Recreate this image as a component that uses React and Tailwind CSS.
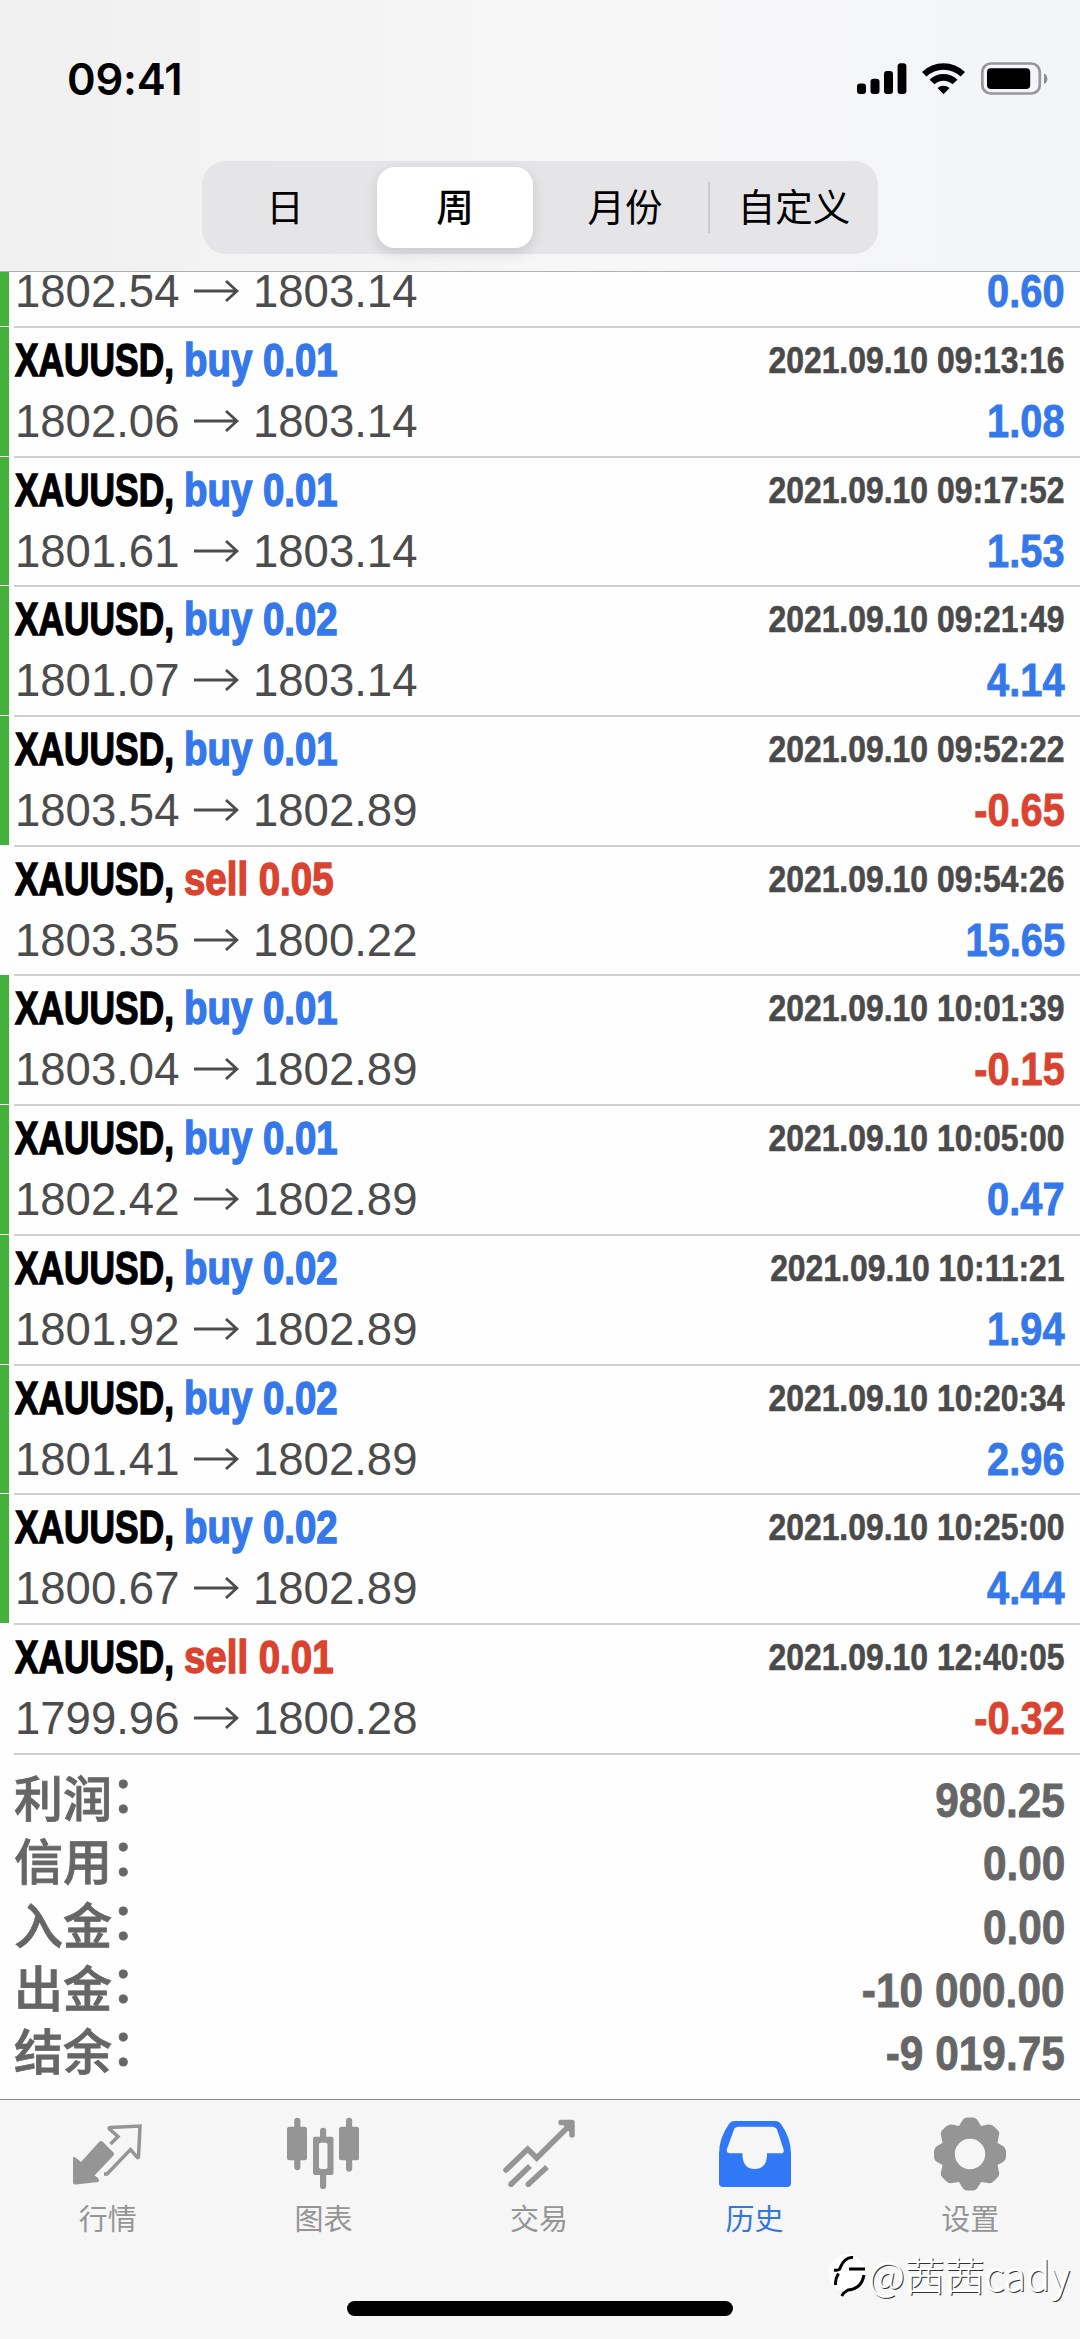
import React from "react";

const deals = [
  { type: "buy", volume: "0.01", open: "1802.06", close: "1803.14", time: "2021.09.10 09:13:16", profit: "1.08", marked: true },
  { type: "buy", volume: "0.01", open: "1801.61", close: "1803.14", time: "2021.09.10 09:17:52", profit: "1.53", marked: true },
  { type: "buy", volume: "0.02", open: "1801.07", close: "1803.14", time: "2021.09.10 09:21:49", profit: "4.14", marked: true },
  { type: "buy", volume: "0.01", open: "1803.54", close: "1802.89", time: "2021.09.10 09:52:22", profit: "-0.65", marked: true },
  { type: "sell", volume: "0.05", open: "1803.35", close: "1800.22", time: "2021.09.10 09:54:26", profit: "15.65", marked: false },
  { type: "buy", volume: "0.01", open: "1803.04", close: "1802.89", time: "2021.09.10 10:01:39", profit: "-0.15", marked: true },
  { type: "buy", volume: "0.01", open: "1802.42", close: "1802.89", time: "2021.09.10 10:05:00", profit: "0.47", marked: true },
  { type: "buy", volume: "0.02", open: "1801.92", close: "1802.89", time: "2021.09.10 10:11:21", profit: "1.94", marked: true },
  { type: "buy", volume: "0.02", open: "1801.41", close: "1802.89", time: "2021.09.10 10:20:34", profit: "2.96", marked: true },
  { type: "buy", volume: "0.02", open: "1800.67", close: "1802.89", time: "2021.09.10 10:25:00", profit: "4.44", marked: true },
  { type: "sell", volume: "0.01", open: "1799.96", close: "1800.28", time: "2021.09.10 12:40:05", profit: "-0.32", marked: false },
];

const totals = [
  { label: "利润", value: "980.25" },
  { label: "信用", value: "0.00" },
  { label: "入金", value: "0.00" },
  { label: "出金", value: "-10 000.00" },
  { label: "结余", value: "-9 019.75" },
];

const StatusBar = () => (
  <div className="flex h-[161px] items-start justify-between pl-[67px] pr-[31px] pt-[55px]">
    <span className="font-['Inter'] text-[43.500px] font-semibold leading-[48px] tracking-[-0.2px]">09:41</span>
    <svg className="mt-[5px]" width="194" height="38" viewBox="0 0 194 38">
      <rect x="2" y="23.500" width="9" height="10.500" rx="3" />
      <rect x="15.500" y="18.700" width="9" height="15.300" rx="3" />
      <rect x="29" y="11" width="9" height="23" rx="3" />
      <rect x="42.600" y="3.200" width="8.800" height="30.800" rx="3" />
      <path d="M67 12 A31 31 0 0 1 110 12 L105.500 16.500 A24.500 24.500 0 0 0 71.500 16.500 Z" />
      <path d="M74.500 19.700 A20 20 0 0 1 102.500 19.700 L97.500 24.300 A13 13 0 0 0 79.500 24.300 Z" />
      <path d="M82.500 28 A9 9 0 0 1 94.500 28 L88.500 34.300 Z" />
      <rect x="127.300" y="3.500" width="57.500" height="30" rx="8.500" fill="none" stroke="#96969b" strokeWidth="2.700" />
      <rect x="132" y="8.200" width="43.200" height="20.800" rx="4" />
      <path d="M189 13.500 C193.500 15 193.500 22.500 189 24 Z" fill="#8e8e93" />
    </svg>
  </div>
);

const PeriodTabs = () => (
  <div className="mx-auto flex h-[93px] w-[676px] items-center rounded-[24px] bg-[#e5e5e7] text-[37.500px] font-normal leading-[48px] text-black">
    <span className="w-[166px] text-center">日</span>
    <span className="ml-[9px] mr-[6px] flex h-[81px] w-[156px] items-center justify-center rounded-[18px] bg-white font-medium shadow-[0_5px_14px_rgba(0,0,0,0.13)]">
      周
    </span>
    <span className="w-[169px] pl-[3px] text-center">月份</span>
    <span className="h-[51px] w-[2px] bg-[#c9c9cc]" />
    <span className="w-[168px] text-center">自定义</span>
  </div>
);

const PriceLine = ({ open, close, profit }) => (
  <div className="flex h-[56px] items-center justify-between pl-[15px] pr-[15px] leading-[56px]">
    <div className="flex items-center text-[45.500px] text-[#4c4c4c]">
      <span className="w-[179px] translate-y-px">{open}</span>
      <svg width="45" height="24" viewBox="0 0 45 24" fill="none" stroke="#4c4c4c" strokeWidth="2.800">
        <path d="M0 12 H42 M32 2 L43 12 L32 22" />
      </svg>
      <span className="ml-[14px] translate-y-px">{close}</span>
    </div>
    <span
      className={`origin-right scale-x-[0.865] text-[46px] font-bold [-webkit-text-stroke:0.8px] ${
        profit.startsWith("-") ? "text-[#d9432f]" : "text-[#3478ea]"
      }`}
    >
      {profit}
    </span>
  </div>
);

const DealRow = ({ deal }) => (
  <div className="flex h-[129.700px]">
    <div className={`mt-px w-[9px] ${deal.marked ? "bg-[#43b13c]" : ""}`} />
    <div className="-ml-[9px] flex-1">
      <div className="ml-[14px] h-[2px] bg-[#d0d0d2]" />
      <div className="mt-[2px] flex h-[61px] items-center justify-between pl-[15px] pr-[15px] leading-[61px]">
        <div className="flex text-[46px] font-bold [-webkit-text-stroke:1.4px]">
          <span className="w-[169px] origin-left scale-x-[0.768]">XAUUSD,</span>
          <span
            className={`origin-left scale-x-[0.835] whitespace-nowrap ${
              deal.type === "buy" ? "text-[#3478ea]" : "text-[#d9432f]"
            }`}
          >
            {deal.type} {deal.volume}
          </span>
        </div>
        <span className="origin-right scale-x-[0.862] text-[37px] font-bold text-[#4a4a4a] [-webkit-text-stroke:0.6px]">
          {deal.time}
        </span>
      </div>
      <div className="mt-[2px]">
        <PriceLine open={deal.open} close={deal.close} profit={deal.profit} />
      </div>
    </div>
  </div>
);

const QuotesIcon = () => (
  <svg width="72" height="76" viewBox="0 0 72 76" fill="#959595">
    <path d="M1 41 Q1 38 9 45 L27 25 Q29 23 31 25 L41 35 Q43 37 41 39 L22.500 58.500 L26 61 Q28 64 26 65 L4 67.500 Q1 68 1 65 Z" />
    <path d="M38.500 27 L46 19.500 L37.500 12 Q36.500 10.500 38 10.500 L68 9 L66.500 40 Q66 41.500 65 40 L58.500 32.500 L35 57 H32" fill="none" stroke="#959595" strokeWidth="3.500" />
  </svg>
);

const ChartIcon = () => (
  <svg width="72" height="76" viewBox="0 0 72 76" fill="#959595">
    <rect x="7.200" y="0.700" width="6.200" height="52.500" rx="3.100" />
    <rect x="0" y="9.700" width="20" height="33.500" rx="2.500" />
    <rect x="59" y="0.700" width="6.200" height="54" rx="3.100" />
    <rect x="52" y="9.700" width="20" height="33.500" rx="2.500" />
    <rect x="33" y="10.700" width="6.200" height="12" rx="3.100" />
    <rect x="33" y="55" width="6.200" height="17" rx="3.100" />
    <path fillRule="evenodd" d="M28 19.700 H44.500 Q46.500 19.700 46.500 21.700 V56 Q46.500 58 44.500 58 H28 Q26 58 26 56 V21.700 Q26 19.700 28 19.700 Z M34 25.700 Q32 25.700 32 28 V50 Q32 52 34 52 H38.500 Q40.500 52 40.500 50 V28 Q40.500 25.700 38.500 25.700 Z" />
  </svg>
);

const TradeIcon = () => (
  <svg width="72" height="76" viewBox="0 0 72 76" fill="none" stroke="#959595" strokeWidth="5.500">
    <path d="M3 53 L24.700 32 L33.700 41 L67 8" strokeLinecap="round" />
    <path d="M58 5.500 H69 V18" fill="#959595" strokeLinecap="round" strokeLinejoin="round" />
    <path d="M8 67.300 L27 49 M25.300 67.300 L44 50" />
    <g fill="#959595" stroke="none">
      <circle cx="8" cy="67.300" r="2.800" />
      <circle cx="25.300" cy="67.300" r="2.800" />
    </g>
  </svg>
);

const HistoryIcon = () => (
  <svg width="72" height="76" viewBox="0 0 72 76">
    <path
      fillRule="evenodd"
      fill="#3178f6"
      d="M15 4 H57 Q60 4 62 7 Q72 21 72 37 V66 Q72 70 68 70 H4 Q0 70 0 66 V37 Q0 21 10 7 Q12 4 15 4 Z M20 9.700 Q16 9.700 15 12.500 L8 32 Q7 36.300 11 36.300 H23.500 V39 Q24.500 52 35.700 52 Q47 52 48 39 V36.300 H62 Q65.500 36.300 64.500 32 L58 12.500 Q56.500 9.700 52.500 9.700 Z"
    />
  </svg>
);

const SettingsIcon = () => (
  <svg width="72" height="76" viewBox="-36 -37 72 76" fill="#959595">
    <path
      fillRule="evenodd"
      d="M-8 -33 Q-6 -36.500 -3 -36.500 H3 Q6 -36.500 8 -33 L11 -28 L18 -29.500 Q21 -30 24 -27.500 L27 -24.500 Q30 -22 29 -19 L27.500 -11 L33 -8 Q36 -6 36 -3 V3 Q36 6 33 8 L27.500 11 L29 18 Q30 21 27 24 L24 27 Q21 30 18 29 L11 28 L8 33 Q6 36.500 3 36.500 H-3 Q-6 36.500 -8 33 L-11 28 L-18 29 Q-21 30 -24 27 L-27 24 Q-30 21 -29 18 L-27.500 11 L-33 8 Q-36 6 -36 3 V-3 Q-36 -6 -33 -8 L-27.500 -11 L-29 -19 Q-30 -22 -27 -24.500 L-24 -27.500 Q-21 -30 -18 -29.500 L-11 -28 Z M0 -15.200 A15.200 15.200 0 1 0 0 15.200 A15.200 15.200 0 1 0 0 -15.200 Z"
    />
  </svg>
);

const tabs = [
  { label: "行情", icon: QuotesIcon },
  { label: "图表", icon: ChartIcon },
  { label: "交易", icon: TradeIcon },
  { label: "历史", icon: HistoryIcon, active: true },
  { label: "设置", icon: SettingsIcon },
];

const Watermark = () => (
  <div className="absolute right-[10px] top-[2251px] flex items-center">
    <svg width="41" height="46" viewBox="0 0 41 46" fill="none">
      <circle cx="20" cy="22" r="18.500" fill="#fff" />
      <path
        d="M7 19 Q13 20 13.500 16 Q18 5.500 26 6.500 M22 18 H38 M11.500 22.500 Q8 28 8.500 34 M37 24 Q34.500 38 21 39 Q17 41 14.700 45"
        stroke="#000"
        strokeWidth="3"
      />
    </svg>
    <span className="font-['Noto_Sans_CJK_SC',sans-serif] text-[40px] font-light leading-[46px] text-white [text-shadow:1px_1px_0_#333,-1px_-1px_1px_#fff]">
      @茜茜cady
    </span>
  </div>
);

const App = () => {
  return (
    <div className="relative flex h-[2339px] w-[1080px] flex-col overflow-hidden bg-[#fefefe] font-['Liberation_Sans','Noto_Sans_CJK_SC',sans-serif]">
      <header className="h-[272px] border-b border-[#b0b0b2] bg-linear-to-r from-[#f0f0f1] via-[#f6f6f6] to-[#f4f5f8]">
        <StatusBar />
        <PeriodTabs />
      </header>

      <main className="flex-1">
        <div className="flex h-[54px]">
          <div className="w-[9px] bg-[#43b13c]" />
          <div className="-ml-[9px] -mt-[9px] flex-1">
            <PriceLine open="1802.54" close="1803.14" profit="0.60" />
          </div>
        </div>
        {deals.map((deal) => (
          <DealRow key={deal.time} deal={deal} />
        ))}
        <div className="ml-[14px] h-[2px] bg-[#d0d0d2]" />
        <div className="pl-[14px] pr-[15px] pt-[14px] font-bold text-[#666]">
          {totals.map((item) => (
            <div key={item.label} className="flex h-[63.400px] items-center justify-between leading-[63px]">
              <span className="flex text-[49px] font-medium [-webkit-text-stroke:0.8px]">
                {item.label}
                <span className="-translate-x-px -translate-y-[5px]">：</span>
              </span>
              <span className="origin-right scale-x-[0.883] text-[48px] [-webkit-text-stroke:0.8px]">{item.value}</span>
            </div>
          ))}
        </div>
      </main>

      <nav className="h-[240px] border-t border-[#8c8c8c] bg-[#f6f6f6]">
        <div className="flex pr-[2px] pt-[17px]">
          {tabs.map(({ label, icon: Icon, active }) => (
            <div key={label} className={`flex flex-1 flex-col items-center ${active ? "text-[#3178e0]" : "text-[#959595]"}`}>
              <Icon />
              <span className="mt-[5px] text-[29px] leading-[44px]">{label}</span>
            </div>
          ))}
        </div>
        <div className="mx-auto mt-[59px] h-[15px] w-[386px] rounded-full bg-black" />
      </nav>
      <Watermark />
    </div>
  );
};

export default App;
